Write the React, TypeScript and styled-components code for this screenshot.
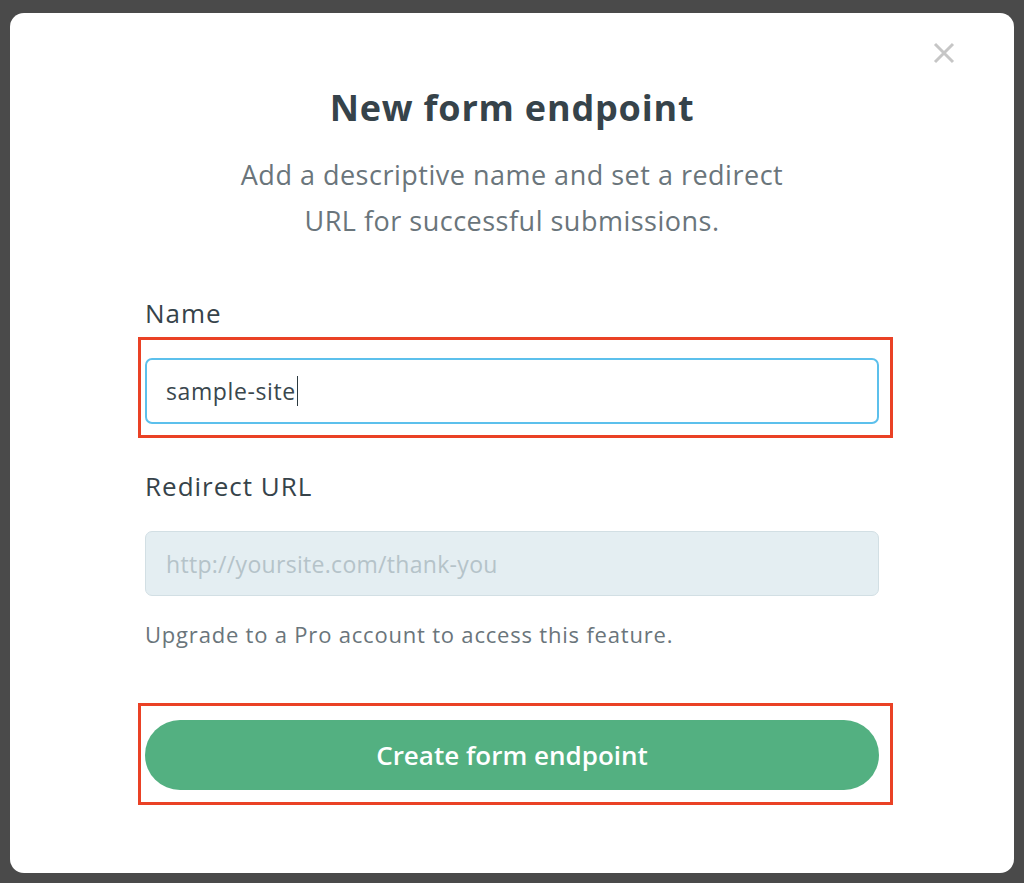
import React from "react";
import styled, { createGlobalStyle } from "styled-components";

const GlobalStyle = createGlobalStyle`
  html, body {
    margin: 0;
    padding: 0;
    background: #4a4a4a;
  }
  body {
    font-family: "Open Sans", "Lato", sans-serif;
  }
  * { box-sizing: border-box; }
`;

const Page = styled.div`
  padding: 13px 10px 10px;
  height: 883px;
`;

const Modal = styled.div`
  position: relative;
  height: 860px;
  background: #ffffff;
  border-radius: 14px;
  padding: 73px 135px 0;
  display: flex;
  flex-direction: column;
`;

const CloseButton = styled.button`
  position: absolute;
  top: 29px;
  right: 59px;
  width: 22px;
  height: 22px;
  padding: 0;
  border: none;
  background: transparent;
  cursor: pointer;
  display: flex;
`;

const Title = styled.h1`
  margin: 0;
  text-align: center;
  font-size: 36px;
  line-height: 44px;
  letter-spacing: 0.8px;
  font-weight: 700;
  color: #36434a;
`;

const Subtitle = styled.p`
  margin: 22px 0 0;
  text-align: center;
  font-size: 27px;
  line-height: 46px;
  letter-spacing: 0.5px;
  font-weight: 400;
  color: #6a757b;
`;

const Label = styled.label<{ $top: number }>`
  display: block;
  margin-top: ${(p) => p.$top}px;
  font-size: 26px;
  line-height: 30px;
  letter-spacing: 1px;
  font-weight: 400;
  color: #36434a;
`;

const Annotated = styled.div<{ $gap: number; $t: number; $b: number }>`
  position: relative;
  margin-top: ${(p) => p.$gap}px;
  &::after {
    content: "";
    position: absolute;
    top: ${(p) => -p.$t}px;
    bottom: ${(p) => -p.$b}px;
    left: -7px;
    right: -14px;
    border: 3px solid #ea4125;
    pointer-events: none;
  }
`;

const ActiveField = styled.div`
  height: 66px;
  border: 2px solid #5cc0ec;
  border-radius: 7px;
  padding: 0 19px;
  display: flex;
  align-items: center;
  font-size: 23px;
  letter-spacing: 0.6px;
  color: #3a474d;
`;

const Caret = styled.span`
  display: inline-block;
  width: 1.5px;
  height: 30px;
  background: #2c3a40;
  margin-left: 1px;
`;

const DisabledField = styled.input`
  display: block;
  width: 100%;
  margin-top: 30px;
  height: 65px;
  border: 1px solid #d2dfe4;
  border-radius: 7px;
  background: #e4eef2;
  padding: 0 20px;
  font-family: inherit;
  font-size: 23px;
  letter-spacing: 0.3px;
  color: #3a474d;
  outline: none;
  &::placeholder {
    color: #b5c3c9;
  }
`;

const Helper = styled.p`
  margin: 25px 0 0;
  font-size: 22px;
  line-height: 26px;
  letter-spacing: 0.8px;
  color: #6a757b;
`;

const SubmitButton = styled.button`
  display: block;
  width: 100%;
  height: 70px;
  border: none;
  border-radius: 35px;
  background: #53b081;
  color: #ffffff;
  font-family: inherit;
  font-size: 26px;
  font-weight: 600;
  cursor: pointer;
`;

export default function App() {
  return (
    <>
      <GlobalStyle />
      <Page>
        <Modal>
          <CloseButton aria-label="Close">
            <svg width="22" height="22" viewBox="0 0 22 22">
              <path
                d="M2 2 L20 20 M20 2 L2 20"
                stroke="#c6c6c6"
                strokeWidth="3"
                strokeLinecap="butt"
              />
            </svg>
          </CloseButton>
          <Title>New form endpoint</Title>
          <Subtitle>
            Add a descriptive name and set a redirect
            <br />
            URL for successful submissions.
          </Subtitle>
          <Label $top={54}>Name</Label>
          <Annotated $gap={30} $t={21} $b={14}>
            <ActiveField>
              <span>sample-site</span>
              <Caret />
            </ActiveField>
          </Annotated>
          <Label $top={47}>Redirect URL</Label>
          <DisabledField disabled placeholder="http://yoursite.com/thank-you" />
          <Helper>Upgrade to a Pro account to access this feature.</Helper>
          <Annotated $gap={73} $t={17} $b={15}>
            <SubmitButton>Create form endpoint</SubmitButton>
          </Annotated>
        </Modal>
      </Page>
    </>
  );
}
